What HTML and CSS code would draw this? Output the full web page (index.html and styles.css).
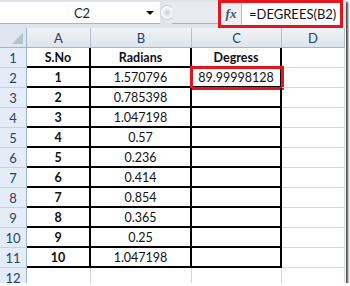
FILE: index.html
```html
<!DOCTYPE html>
<html lang="en">
<head>
    <meta charset="UTF-8">
    <meta name="viewport" content="width=device-width, initial-scale=1.0">
    <title>DEGREES</title>
    <link rel="stylesheet" href="styles.css">
</head>
<body>
    <div class="sheet">
        <!-- Barra de fórmulas -->
        <div class="formula-bar">
            <div class="name-box">
                <span class="name-text">C2</span>
                <span class="drop"></span>
            </div>
            <div class="splitter"></div>
            <div class="formula-space"></div>
            <div class="formula-box">
                <span class="fx">fx</span>
                <span class="formula">=DEGREES(B2)</span>
            </div>
        </div>

        <!-- Grade da planilha -->
        <div class="grid">
            <div class="corner"><span class="tri"></span></div>
            <div class="col-head">A</div>
            <div class="col-head">B</div>
            <div class="col-head">C</div>
            <div class="col-head">D</div>

            <div class="row-head">1</div>
            <div class="cell box bold">S.No</div>
            <div class="cell box bold">Radians</div>
            <div class="cell box bold">Degress</div>
            <div class="cell"></div>

            <div class="row-head">2</div>
            <div class="cell box bold">1</div>
            <div class="cell box">1.570796</div>
            <div class="cell box active">89.99998128</div>
            <div class="cell"></div>

            <div class="row-head">3</div>
            <div class="cell box bold">2</div>
            <div class="cell box">0.785398</div>
            <div class="cell box"></div>
            <div class="cell"></div>

            <div class="row-head">4</div>
            <div class="cell box bold">3</div>
            <div class="cell box">1.047198</div>
            <div class="cell box"></div>
            <div class="cell"></div>

            <div class="row-head">5</div>
            <div class="cell box bold">4</div>
            <div class="cell box">0.57</div>
            <div class="cell box"></div>
            <div class="cell"></div>

            <div class="row-head">6</div>
            <div class="cell box bold">5</div>
            <div class="cell box">0.236</div>
            <div class="cell box"></div>
            <div class="cell"></div>

            <div class="row-head">7</div>
            <div class="cell box bold">6</div>
            <div class="cell box">0.414</div>
            <div class="cell box"></div>
            <div class="cell"></div>

            <div class="row-head">8</div>
            <div class="cell box bold">7</div>
            <div class="cell box">0.854</div>
            <div class="cell box"></div>
            <div class="cell"></div>

            <div class="row-head">9</div>
            <div class="cell box bold">8</div>
            <div class="cell box">0.365</div>
            <div class="cell box"></div>
            <div class="cell"></div>

            <div class="row-head">10</div>
            <div class="cell box bold">9</div>
            <div class="cell box">0.25</div>
            <div class="cell box"></div>
            <div class="cell"></div>

            <div class="row-head">11</div>
            <div class="cell box bold">10</div>
            <div class="cell box">1.047198</div>
            <div class="cell box"></div>
            <div class="cell"></div>

            <div class="row-head">12</div>
            <div class="cell"></div>
            <div class="cell"></div>
            <div class="cell"></div>
            <div class="cell"></div>
        </div>
    </div>
</body>
</html>
```

FILE: styles.css
```css
/* Janela da planilha com sombra */
body {
    margin: 0;
    padding: 0;
    background-color: #fff;
    font-family: "Lato", "Liberation Sans", sans-serif;
}

.sheet {
    width: 346px;
    height: 283px;
    overflow: hidden;
    background-color: #fff;
    box-shadow: 2px 2px 2px #444;
}

/* Barra de fórmulas */
.formula-bar {
    display: flex;
    height: 28px;
    background-color: #dfe4ea;
}

.name-box {
    width: 160px;
    height: 21px;
    margin-top: 2px;
    background-color: #fff;
    border-bottom: 1px solid #a7b4c4;
    display: flex;
    align-items: center;
}

.name-text {
    flex: 1;
    text-align: center;
    font-size: 13px;
    color: #222;
    padding-left: 18px;
}

.drop {
    width: 0;
    height: 0;
    border-left: 4px solid transparent;
    border-right: 4px solid transparent;
    border-top: 4px solid #111;
    margin-right: 6px;
}

.splitter {
    width: 12px;
    height: 21px;
    margin-top: 2px;
    background: radial-gradient(circle at 60% 50%, #c8cdd4 0, #eef0f3 4px, #f7f8fa 6px, #c3cad3 7px, #e6e9ed 8px);
    border-radius: 10px 0 0 10px;
}

.formula-space {
    flex: 1;
    height: 21px;
    margin-top: 2px;
    background-color: #e7eaee;
    border-bottom: 1px solid #a7b4c4;
}

.formula-box {
    width: 119px;
    height: 22px;
    border: 3px solid #e8141b;
    display: flex;
    align-items: center;
    background-color: #fff;
    margin-right: 3px;
}

.fx {
    width: 20px;
    height: 100%;
    display: flex;
    align-items: center;
    justify-content: center;
    background-color: #eceef1;
    border-right: 1px solid #b8c2ce;
    font-family: "Liberation Serif", serif;
    font-style: italic;
    font-weight: bold;
    font-size: 13px;
    color: #44546c;
}

.formula {
    padding-left: 7px;
    font-size: 13px;
    color: #111;
}

/* Grade */
.grid {
    display: grid;
    grid-template-columns: 27px 64px 101px 90px 63px;
    grid-auto-rows: 20px;
}

.corner,
.col-head,
.row-head,
.cell {
    box-sizing: border-box;
    display: flex;
    align-items: center;
    justify-content: center;
    font-size: 12.5px;
}

.corner {
    background-color: #dfe6ef;
    border-right: 1px solid #9eb6ce;
    border-bottom: 1px solid #9eb6ce;
    position: relative;
}

.tri {
    position: absolute;
    right: 3px;
    bottom: 3px;
    width: 0;
    height: 0;
    border-left: 11px solid transparent;
    border-bottom: 11px solid #b6c1ce;
}

.col-head {
    background: linear-gradient(#f0f3f7, #dde4ec);
    border-right: 1px solid #b2bfcf;
    border-bottom: 1px solid #9eb6ce;
    color: #27415f;
    font-size: 13px;
}

.row-head {
    background-color: #e4ecf7;
    border-right: 1px solid #9eb6ce;
    border-bottom: 1px solid #c5d1de;
    color: #27415f;
    font-size: 13px;
}

.cell {
    border-right: 1px solid #d0d7e5;
    border-bottom: 1px solid #d0d7e5;
    color: #111;
}

.cell.box {
    border-right: 2px solid #000;
    border-bottom: 2px solid #000;
}

.bold {
    font-weight: bold;
}

.active {
    outline: 3px solid #e8141b;
    outline-offset: -1px;
}
```
